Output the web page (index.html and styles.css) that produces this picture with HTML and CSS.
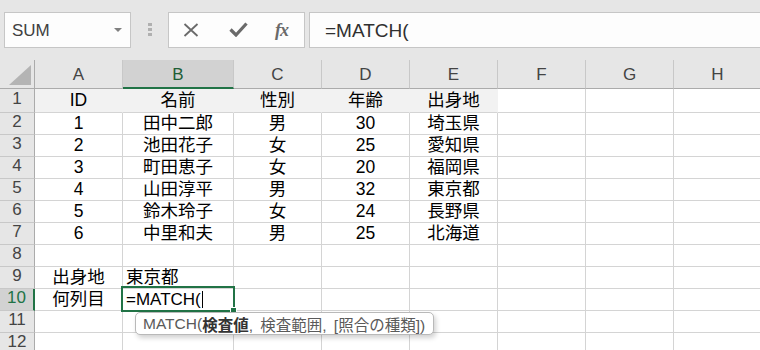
FILE: index.html
```html
<!DOCTYPE html>
<html lang="ja">
<head>
<meta charset="utf-8">
<link rel="stylesheet" href="styles.css">
</head>
<body>
<div class="app">
  <div class="fbar">
    <div class="namebox"><span class="nb-text">SUM</span><span class="caret"></span></div>
    <div class="grip"><i></i><i></i><i></i></div>
    <div class="fnbox">
      <svg class="ico" width="16" height="14" viewBox="0 0 16 14"><path d="M1.5 1 L14.5 13 M14.5 1 L1.5 13" stroke="#6a6a6a" stroke-width="1.8" fill="none"/></svg>
      <svg class="ico" width="19" height="15" viewBox="0 0 19 15"><path d="M1.5 7.5 L7 13 L17.5 1.5" stroke="#6a6a6a" stroke-width="3.2" fill="none"/></svg>
      <span class="fx">fx</span>
    </div>
    <div class="formula">=MATCH(</div>
  </div>
  <div class="sheet">
    <div class="h corner"><svg width="34" height="28" viewBox="0 0 34 28"><polygon points="31,5 31,25 9,25" fill="#b4b4b4"/></svg></div>
    <div class="h">A</div><div class="h sel">B</div><div class="h">C</div><div class="h">D</div><div class="h">E</div><div class="h">F</div><div class="h">G</div><div class="h">H</div>

    <div class="rh">1</div><div class="c t">ID</div><div class="c t">名前</div><div class="c t">性別</div><div class="c t">年齢</div><div class="c t">出身地</div><div class="c"></div><div class="c"></div><div class="c"></div>
    <div class="rh">2</div><div class="c">1</div><div class="c">田中二郎</div><div class="c">男</div><div class="c">30</div><div class="c">埼玉県</div><div class="c"></div><div class="c"></div><div class="c"></div>
    <div class="rh">3</div><div class="c">2</div><div class="c">池田花子</div><div class="c">女</div><div class="c">25</div><div class="c">愛知県</div><div class="c"></div><div class="c"></div><div class="c"></div>
    <div class="rh">4</div><div class="c">3</div><div class="c">町田恵子</div><div class="c">女</div><div class="c">20</div><div class="c">福岡県</div><div class="c"></div><div class="c"></div><div class="c"></div>
    <div class="rh">5</div><div class="c">4</div><div class="c">山田淳平</div><div class="c">男</div><div class="c">32</div><div class="c">東京都</div><div class="c"></div><div class="c"></div><div class="c"></div>
    <div class="rh">6</div><div class="c">5</div><div class="c">鈴木玲子</div><div class="c">女</div><div class="c">24</div><div class="c">長野県</div><div class="c"></div><div class="c"></div><div class="c"></div>
    <div class="rh">7</div><div class="c">6</div><div class="c">中里和夫</div><div class="c">男</div><div class="c">25</div><div class="c">北海道</div><div class="c"></div><div class="c"></div><div class="c"></div>
    <div class="rh">8</div><div class="c"></div><div class="c"></div><div class="c"></div><div class="c"></div><div class="c"></div><div class="c"></div><div class="c"></div><div class="c"></div>
    <div class="rh">9</div><div class="c">出身地</div><div class="c l">東京都</div><div class="c"></div><div class="c"></div><div class="c"></div><div class="c"></div><div class="c"></div><div class="c"></div>
    <div class="rh rsel">10</div><div class="c">何列目</div><div class="c l active"><span class="ftext">=MATCH(</span><span class="cursor"></span></div><div class="c"></div><div class="c"></div><div class="c"></div><div class="c"></div><div class="c"></div><div class="c"></div>
    <div class="rh">11</div><div class="c"></div><div class="c"></div><div class="c"></div><div class="c"></div><div class="c"></div><div class="c"></div><div class="c"></div><div class="c"></div>
    <div class="rh">12</div><div class="c"></div><div class="c"></div><div class="c"></div><div class="c"></div><div class="c"></div><div class="c"></div><div class="c"></div><div class="c"></div>

    <div class="tip">MATCH(<b>検査値</b>, 検査範囲, [照合の種類])</div>
  </div>
</div>
</body>
</html>
```

FILE: styles.css
```css
html, body {
  margin: 0;
  padding: 0;
  background: #ffffff;
  overflow: hidden;
}
.app {
  width: 760px;
  height: 350px;
  overflow: hidden;
  font-family: "Liberation Sans", "Noto Sans CJK JP", sans-serif;
}
.fbar {
  height: 60px;
  background: #e6e6e6;
  display: flex;
  align-items: flex-start;
  padding: 12px 0 0 4px;
  box-sizing: border-box;
}
.namebox {
  width: 127px;
  height: 36px;
  box-sizing: border-box;
  border: 1px solid #c6c6c6;
  background: #fdfdfd;
  display: flex;
  align-items: center;
  justify-content: space-between;
  padding: 2px 8px 0 7px;
  font-size: 17px;
  color: #404040;
}
.caret {
  width: 0;
  height: 0;
  border-left: 4px solid transparent;
  border-right: 4px solid transparent;
  border-top: 4px solid #808080;
  margin-top: -3px;
}
.grip {
  margin: 11px 0 0 17px;
  width: 4px;
  display: flex;
  flex-direction: column;
  gap: 2px;
}
.grip i {
  display: block;
  width: 4px;
  height: 3px;
  background: #b0b0b0;
}
.fnbox {
  margin-left: 16px;
  width: 137px;
  height: 36px;
  box-sizing: border-box;
  border: 1px solid #c6c6c6;
  background: #fdfdfd;
  display: flex;
  align-items: center;
  padding: 0 0 0 14px;
}
.ico { display: block; }
.fnbox .ico:nth-child(2) { margin-left: 30px; margin-top: -2px; }
.fx {
  margin-left: 27px;
  font-family: "Liberation Serif", serif;
  font-style: italic;
  font-weight: bold;
  font-size: 18px;
  color: #6a6a6a;
  letter-spacing: -1px;
}
.formula {
  margin-left: 4px;
  flex: 1;
  height: 36px;
  box-sizing: border-box;
  border: 1px solid #c6c6c6;
  border-right: none;
  background: #fdfdfd;
  display: flex;
  align-items: center;
  padding: 1px 0 0 15px;
  font-size: 19px;
  color: #303030;
}
.sheet {
  position: relative;
  display: grid;
  grid-template-columns: 35px 88px 111px 88px 88px 88px 88px 88px 88px;
  grid-template-rows: 29px 24px repeat(11, 22px);
}
.sheet > div {
  box-sizing: border-box;
}
.h {
  background: #e6e6e6;
  border-right: 1px solid #c8c8c8;
  border-bottom: 1px solid #ababab;
  display: flex;
  align-items: center;
  justify-content: center;
  font-family: "Liberation Sans", sans-serif;
  font-size: 17px;
  color: #444444;
  padding-top: 1px;
}
.h.corner {
  border-right: 1px solid #ababab;
  padding: 0;
  align-items: flex-start;
}
.h.sel {
  background: #d2d2d2;
  border-bottom: 2px solid #217346;
  color: #1e5e36;
  padding-top: 2px;
}
.rh {
  background: #e6e6e6;
  border-right: 1px solid #ababab;
  border-bottom: 1px solid #c8c8c8;
  display: flex;
  align-items: center;
  justify-content: center;
  font-family: "Liberation Sans", sans-serif;
  font-size: 17px;
  color: #444444;
  padding-bottom: 3px;
}
.rh.rsel {
  background: #d2d2d2;
  border-right: 2px solid #217346;
  color: #217346;
}
.c {
  border-right: 1px solid #d4d4d4;
  border-bottom: 1px solid #d4d4d4;
  display: flex;
  align-items: center;
  justify-content: center;
  font-family: "Liberation Sans", "Noto Sans CJK JP", sans-serif;
  font-size: 17.5px;
  line-height: 1;
  color: #000000;
  white-space: nowrap;
}
.c.t {
  background: #f2f2f2;
  border-right-color: #f2f2f2;
}
.c.l {
  justify-content: flex-start;
  padding-left: 3px;
}
.active {
  position: relative;
}
.active::before {
  content: "";
  position: absolute;
  left: -2px;
  top: -3px;
  right: -2px;
  bottom: -2px;
  border: 2px solid #217346;
}
.active::after {
  content: "";
  position: absolute;
  right: -4px;
  bottom: -4px;
  width: 5px;
  height: 5px;
  background: #217346;
  border: 1px solid #ffffff;
}
.ftext {
  font-family: "Liberation Sans", sans-serif;
  font-size: 17px;
}
.cursor {
  display: inline-block;
  width: 1px;
  height: 17px;
  background: #000000;
  margin-left: 1px;
}
.tip {
  position: absolute;
  left: 135px;
  top: 252px;
  height: 23px;
  box-sizing: border-box;
  padding: 0 8px 0 7px;
  border: 1px solid #b9b9b9;
  border-radius: 5px;
  background: #ffffff;
  box-shadow: 2px 3px 5px rgba(0, 0, 0, 0.18);
  display: flex;
  align-items: center;
  font-family: "Liberation Sans", "Noto Sans CJK JP", sans-serif;
  font-size: 15.5px;
  word-spacing: 3px;
  color: #5a5a5a;
  white-space: pre;
}
.tip b {
  font-weight: bold;
  color: #333333;
}
```
